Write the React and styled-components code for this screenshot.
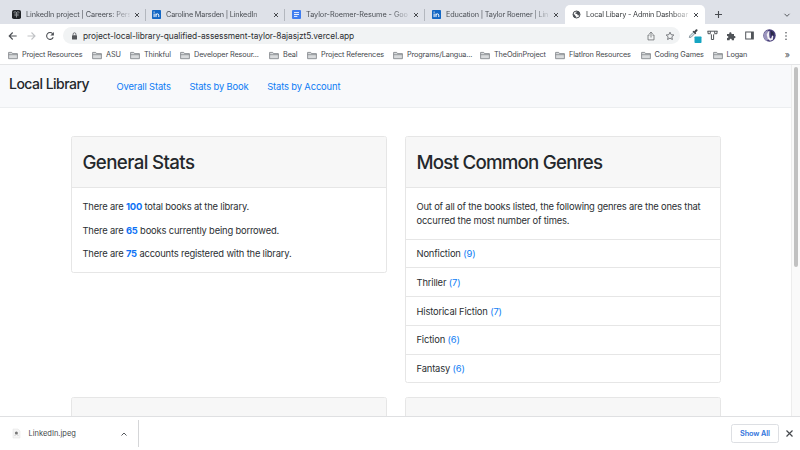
import React from "react";
import styled, { createGlobalStyle } from "styled-components";

const GlobalStyle = createGlobalStyle`
  * { box-sizing: border-box; }
  body { margin: 0; background: #fff; overflow: hidden; font-family: Inter, "Liberation Sans", sans-serif; }
  svg { display: block; flex: none; }
`;

const Browser = styled.div`
  width: 800px;
  height: 450px;
  display: flex;
  flex-direction: column;
  overflow: hidden;
  background: #fff;
`;

/* Tab strip */
const TabStrip = styled.div`
  height: 24px;
  flex: none;
  display: flex;
  align-items: flex-end;
  padding-left: 5px;
  background: #dee1e8;
`;
const Tab = styled.div`
  width: 140px;
  height: 19px;
  display: flex;
  align-items: center;
  padding: 0 6px 0 7px;
  border-radius: 5px 5px 0 0;
  background: ${(p) => (p.$active ? "#fff" : "transparent")};
  color: ${(p) => (p.$active ? "#3d4043" : "#4c5056")};
`;
const TabTitle = styled.span`
  width: 104px;
  margin: 0 4px 0 5px;
  white-space: nowrap;
  font-size: 7.3px;
  line-height: 12px;
  letter-spacing: ${(p) => p.$spacing || 0}px;
  mask-image: linear-gradient(to right, #000 86px, transparent 106px);
`;
const TabDivider = styled.i`
  width: 1px;
  height: 12px;
  margin: 0 -6px 0 5px;
  flex: none;
  align-self: center;
  background: ${(p) => (p.$hidden ? "transparent" : "#b3b7be")};
`;
const StripActions = styled.div`
  flex: 1;
  height: 19px;
  display: flex;
  align-items: center;
  justify-content: space-between;
  padding: 0 9px 0 8.5px;
`;

/* Address row */
const Toolbar = styled.div`
  height: 23px;
  flex: none;
  display: flex;
  align-items: center;
  padding: 0 8px;
`;
const NavButtons = styled.div`
  width: 55px;
  display: flex;
  gap: 9.5px;
`;
const AddressBar = styled.div`
  width: 617px;
  height: 17px;
  display: flex;
  align-items: center;
  padding: 0 5px 0 7.5px;
  border-radius: 9px;
  background: #f1f3f4;
`;
const Url = styled.span`
  flex: 1;
  margin-left: 5.5px;
  font-size: 8.4px;
  line-height: 14px;
  letter-spacing: -0.07px;
  color: #2c2e31;
`;
const AddressActions = styled.div`
  display: flex;
  gap: 9px;
`;
const Extensions = styled.div`
  display: flex;
  align-items: center;
  gap: 8.7px;
  margin-left: 8px;
`;

/* Bookmarks */
const Bookmarks = styled.div`
  height: 18px;
  flex: none;
  display: flex;
  align-items: center;
  padding: 0 10px 1px 8px;
  border-bottom: 1px solid #e4e5e7;
`;
const Bookmark = styled.div`
  width: ${(p) => p.$width}px;
  flex: none;
  display: flex;
  align-items: center;
  gap: 4px;
  white-space: nowrap;
  font-size: 7.3px;
  line-height: 12px;
  letter-spacing: -0.13px;
  color: #45484d;
`;
const Overflow = styled.span`
  margin: -2px 0 0 auto;
  font-size: 9px;
  line-height: 11px;
  color: #4b4e52;
`;

/* Page */
const Viewport = styled.div`
  height: 351px;
  flex: none;
  display: flex;
  overflow: hidden;
`;
const Page = styled.div`
  width: 791px;
  flex: none;
`;
const Scrollbar = styled.div`
  width: 9px;
  padding: 2px 0 0 2px;
  border-left: 1px solid #ededed;
  background: #fafafa;
`;
const Thumb = styled.div`
  width: 4px;
  height: 200px;
  border-radius: 2px;
  background: #c1c1c1;
`;
const SiteNav = styled.nav`
  height: 43px;
  display: flex;
  align-items: center;
  padding-left: 9px;
  border-bottom: 1px solid #eceef0;
  background: #f8f9fb;
`;
const Brand = styled.h1`
  width: 107.5px;
  margin: 0 0 5px;
  font-size: 14px;
  line-height: 17px;
  font-weight: 500;
  letter-spacing: -0.52px;
  white-space: nowrap;
  color: #24282c;
`;
const SiteLinks = styled.div`
  display: flex;
  gap: 18.7px;
  padding-top: 1px;
`;
const SiteLink = styled.a`
  font-size: 9.4px;
  line-height: 14px;
  letter-spacing: -0.14px;
  color: #0d7cf5;
`;
const CardGrid = styled.main`
  display: grid;
  grid-template-columns: 316.5px 316.5px;
  gap: 14px 17.5px;
  align-items: start;
  padding: 28px 0 0 70.5px;
`;
const Card = styled.section`
  border: 1px solid #e6e6e6;
  border-radius: 2.5px;
  overflow: hidden;
  background: #fff;
`;
const CardHeader = styled.header`
  height: 51px;
  display: flex;
  align-items: center;
  padding: 1px 11px 0;
  border-bottom: 1px solid #e6e6e6;
  background: #f7f7f7;
`;
const CardTitle = styled.h2`
  margin: 0;
  font-size: 18.7px;
  line-height: 23px;
  font-weight: 500;
  letter-spacing: ${(p) => p.$spacing}px;
  color: #24282c;
`;
const CardBody = styled.div`
  padding: 12px 11.5px ${(p) => p.$bottom}px 11px;
  font-size: 9.4px;
  line-height: 14.4px;
  letter-spacing: -0.185px;
  color: #2b2f33;
`;
const Paragraph = styled.p`
  margin: 0 0 9.1px;
  white-space: nowrap;
`;
const Figure = styled.strong`
  font-weight: 700;
  color: #0d72f5;
`;
const GenreList = styled.ul`
  margin: 0;
  padding: 0;
  list-style: none;
`;
const Genre = styled.li`
  height: 28.7px;
  padding: 7.4px 11px 0;
  border-top: 1px solid #e6e6e6;
  font-size: 9.4px;
  line-height: 14.4px;
  letter-spacing: -0.16px;
  color: #2b2f33;
`;
const Count = styled.span`
  color: #0d7cf5;
`;

/* Download shelf */
const Shelf = styled.footer`
  height: 34px;
  flex: none;
  display: flex;
  align-items: center;
  padding-right: 6px;
  border-top: 1px solid #dfe0e2;
`;
const Download = styled.div`
  width: 139px;
  height: 27px;
  display: flex;
  align-items: center;
  justify-content: space-between;
  padding: 0 10px 0 11px;
  border-right: 1px solid #d5d6d8;
`;
const FileName = styled.span`
  flex: 1;
  margin-left: 6.5px;
  font-size: 7.5px;
  letter-spacing: 0;
  color: #44474b;
`;
const ShowAll = styled.button`
  width: 48px;
  height: 19px;
  margin: 0 6px 0 auto;
  padding: 0;
  border: 1px solid #dddfe3;
  border-radius: 2.5px;
  background: #fff;
  font: 600 7.3px Inter, sans-serif;
  letter-spacing: -0.1px;
  color: #2f73dc;
`;

/* Icons */
const Close = ({ size = 6, color = "#46494e" }) => (
  <svg width={size} height={size} viewBox="0 0 6 6">
    <path d="M1 1l4 4M5 1L1 5" stroke={color} strokeWidth={size > 6 ? 0.8 : 1} />
  </svg>
);
const Chevron = ({ up }) => (
  <svg width="8" height="8" viewBox="0 0 8 8" fill="none">
    <path d={up ? "M1.5 5.5L4 3l2.5 2.5" : "M1.5 2.8L4 5.3l2.5-2.5"} stroke="#55585d" strokeWidth="1" />
  </svg>
);
const ThinkfulMark = () => (
  <svg width="9" height="9" viewBox="0 0 9 9">
    <rect width="9" height="9" rx="1.8" fill="#202327" />
    <path d="M1.6 2.5l1.5-.8 1.4.8 1.4-.8 1.5.8M4.5 2.5v5M3.1 3.3v2.8M5.9 3.3v2.8" stroke="#b9bdc1" strokeWidth=".7" fill="none" />
  </svg>
);
const LinkedInMark = () => (
  <svg width="9" height="9" viewBox="0 0 9 9">
    <rect width="9" height="9" rx=".8" fill="#1266c4" />
    <path d="M2.1 3.6v3.5M4 7.1V3.6M4 5.2c0-1.8 2.8-1.8 2.8 0v1.9" fill="none" stroke="#fff" strokeWidth="1" />
    <circle cx="2.1" cy="2.1" r=".65" fill="#fff" />
  </svg>
);
const DocsMark = () => (
  <svg width="9" height="9" viewBox="0 0 9 9">
    <rect width="9" height="9" rx="1" fill="#3f7df0" />
    <path d="M2 2.6h5M2 4.5h5M2 6.4h3.4" stroke="#fff" strokeWidth=".9" />
  </svg>
);
const GlobeMark = () => (
  <svg width="9" height="9" viewBox="0 0 9 9">
    <circle cx="4.5" cy="4.5" r="3.5" fill="#fff" stroke="#4b4f54" strokeWidth="1" />
    <path d="M1 3.8L3.2 5v1l1 .5v1.4C2.3 8 .9 6.5 1 3.8zM4.2 1h2L8 3.6 7.5 5.5 5.500 5.200 5.300 4 3.300 3.700 3.600 2.500 4.800 2.200z" fill="#4b4f54" />
  </svg>
);
const Folder = () => (
  <svg width="10" height="9" viewBox="0 0 10 9">
    <path d="M.6 7.7V1.4h3.1l.9 1.2h4.8v5.1z" fill="#d8dadc" stroke="#7b7f84" strokeWidth=".8" />
    <path d="M.6 3.7h8.8" stroke="#7b7f84" strokeWidth=".7" />
  </svg>
);
const Back = ({ forward }) => (
  <svg width="9" height="10" viewBox="0 0 9 10" fill="none" stroke={forward ? "#c1c3c6" : "#4b4e53"} strokeWidth="1.1">
    <path d={forward ? "M.5 5h7.5M4.5 1.5L8 5 4.5 8.5" : "M8.7 5H1.2M4.7 1.5L1.2 5l3.5 3.5"} />
  </svg>
);
const Reload = () => (
  <svg width="10" height="10" viewBox="0 0 10 10" fill="none" stroke="#4b4e53" strokeWidth="1.1">
    <path d="M8.2 6.2A3.4 3.4 0 1 1 7.6 2.7" />
    <path d="M8.9 .9v3.5H5.4z" fill="#4b4e53" stroke="none" />
  </svg>
);
const Lock = () => (
  <svg width="7" height="8" viewBox="0 0 7 8">
    <rect x="1" y="3.2" width="5" height="4.3" rx=".5" fill="#53565a" />
    <path d="M2.1 3.4V2.2a1.4 1.4 0 0 1 2.8 0v1.2" fill="none" stroke="#53565a" strokeWidth=".8" />
  </svg>
);
const Share = () => (
  <svg width="10" height="10" viewBox="0 0 10 10" fill="none" stroke="#696c70" strokeWidth=".8">
    <path d="M3.7 4H2v4.9h6V4H6.3M5 6.5V1.2M3.3 2.8L5 1.1l1.7 1.7" />
  </svg>
);
const Star = () => (
  <svg width="10" height="10" viewBox="0 0 10 10" fill="none" stroke="#5d6064" strokeWidth=".8" strokeLinejoin="round">
    <path d="M5 1.2l1.15 2.5 2.7.3-2 1.8.55 2.7L5 7.15 2.6 8.5l.55-2.7-2-1.8 2.7-.3z" />
  </svg>
);
const Dropper = () => (
  <svg width="10" height="15" viewBox="0 0 10 15" overflow="visible">
    <path d="M1.3 9.5l.5-1.7 3.5-3.5 1.4 1.4-3.5 3.5z" fill="#d6e5ea" stroke="#72828b" strokeWidth=".8" />
    <path d="M4.5 3.6l1-.8.8.5 1.5-1.7c1-1 2.4.3 1.5 1.4L7.7 4.6l.5.8-.9.9z" fill="#41474c" />
    <rect x="6.500" y="8.500" width="7" height="6.500" rx=".7" fill="#16a5c2" />
  </svg>
);
const PipeMark = () => (
  <svg width="11" height="11" viewBox="0 0 11 11" fill="none" stroke="#505459" strokeWidth="1">
    <path d="M1 1v2.700h2.400l1 .9V9.500h2.200V4.600l1-.9H10V1M.5 1.200h10M3.300 1.200v1.800M7.700 1.200v1.800" />
  </svg>
);
const Puzzle = () => (
  <svg width="10" height="10" viewBox="0 0 10 10">
    <path d="M1 3h2.300c-.7-2.500 2.800-2.500 2.200 0H8v2c2-.4 2 2.500 0 2.200V9.300H5.800c.3-2-2.400-2-2.200 0H1V7.100c1.900.1 1.900-2.300 0-2.200z" fill="#505459" />
  </svg>
);
const SidePanel = () => (
  <svg width="9" height="9" viewBox="0 0 9 9">
    <rect x=".7" y="1" width="7.6" height="7" fill="#fff" stroke="#505459" strokeWidth="1" />
    <path d="M6 1h2.300v7H6z" fill="#505459" />
  </svg>
);
const Avatar = () => (
  <svg width="13" height="13" viewBox="0 0 13 13">
    <circle cx="6.5" cy="6.5" r="6.2" fill="#463d78" />
    <path d="M1 4.500Q2 1.500 5 .9L4 5l1.400 5.500L3.500 12C.8 10.200 0 7.200 1 4.500z" fill="#9a94bd" />
    <path d="M4.800 2.500L6.500 2l-.3 3 .3 3.500 1.500 1.300 1.300-3.300 1 .7-.5 3.500-2.800 1.100-2.300-2L3.700 5.700z" fill="#f1eff4" />
    <path d="M7.500 1.500l3 2 .6 4-1.500-2-1.300 1.600z" fill="#282846" />
  </svg>
);
const Menu = () => (
  <svg width="4" height="10" viewBox="0 0 4 10" fill="#505459">
    <circle cx="2" cy="1.8" r=".8" /><circle cx="2" cy="5" r=".8" /><circle cx="2" cy="8.2" r=".8" />
  </svg>
);
const Plus = () => (
  <svg width="9" height="9" viewBox="0 0 9 9"><path d="M4.500 1v7M1 4.500h7" stroke="#484b50" strokeWidth="1.1" /></svg>
);
const FileIcon = () => (
  <svg width="11" height="11" viewBox="0 0 11 11">
    <path d="M2 1h5l2 2v7H2z" fill="#f5f5f5" stroke="#e3e3e3" strokeWidth=".5" />
    <circle cx="5.4" cy="5" r="1.5" fill="#777" />
    <path d="M3.500 7.500q2-2 4 0" fill="none" stroke="#bbb" strokeWidth=".7" />
  </svg>
);

const tabs = [
  { title: "LinkedIn project | Careers: Pers", icon: <ThinkfulMark />, spacing: -0.1 },
  { title: "Caroline Marsden | LinkedIn", icon: <LinkedInMark />, spacing: -0.19 },
  { title: "Taylor-Roemer-Resume - Goo", icon: <DocsMark />, spacing: -0.05 },
  { title: "Education | Taylor Roemer | Lin", icon: <LinkedInMark />, spacing: -0.17 },
  { title: "Local Libary - Admin Dashboar", icon: <GlobeMark />, spacing: -0.17, active: true },
];
const bookmarks = [
  ["Project Resources", 84], ["ASU", 38], ["Thinkful", 50], ["Developer Resour...", 89],
  ["Beal", 38], ["Project References", 86], ["Programs/Langua...", 87], ["TheOdinProject", 75],
  ["FlatIron Resources", 85.5], ["Coding Games", 72], ["Logan", 50],
];
const stats = [
  ["100", "total books at the library."],
  ["65", "books currently being borrowed."],
  ["75", "accounts registered with the library."],
];
const genres = [["Nonfiction", 9], ["Thriller", 7], ["Historical Fiction", 7], ["Fiction", 6], ["Fantasy", 6]];

export default function App() {
  return (
    <Browser>
      <GlobalStyle />
      <TabStrip>
        {tabs.map((t, i) => (
          <Tab key={t.title} $active={t.active}>
            {t.icon}
            <TabTitle $spacing={t.spacing}>{t.title}</TabTitle>
            <Close />
            <TabDivider $hidden={i > 2} />
          </Tab>
        ))}
        <StripActions><Plus /><Chevron /></StripActions>
      </TabStrip>
      <Toolbar>
        <NavButtons><Back /><Back forward /><Reload /></NavButtons>
        <AddressBar>
          <Lock />
          <Url>project-local-library-qualified-assessment-taylor-8ajasjzt5.vercel.app</Url>
          <AddressActions><Share /><Star /></AddressActions>
        </AddressBar>
        <Extensions><Dropper /><PipeMark /><Puzzle /><SidePanel /><Avatar /><Menu /></Extensions>
      </Toolbar>
      <Bookmarks>
        {bookmarks.map(([name, width]) => <Bookmark key={name} $width={width}><Folder />{name}</Bookmark>)}
        <Overflow>»</Overflow>
      </Bookmarks>
      <Viewport>
        <Page>
          <SiteNav>
            <Brand>Local Library</Brand>
            <SiteLinks>
              <SiteLink>Overall Stats</SiteLink>
              <SiteLink>Stats by Book</SiteLink>
              <SiteLink>Stats by Account</SiteLink>
            </SiteLinks>
          </SiteNav>
          <CardGrid>
            <Card>
              <CardHeader><CardTitle $spacing={-0.63}>General Stats</CardTitle></CardHeader>
              <CardBody $bottom={1.5}>
                {stats.map(([n, text]) => <Paragraph key={n}>There are <Figure>{n}</Figure> {text}</Paragraph>)}
              </CardBody>
            </Card>
            <Card>
              <CardHeader><CardTitle $spacing={-0.76}>Most Common Genres</CardTitle></CardHeader>
              <CardBody $bottom={0.9}>
                <Paragraph>
                  Out of all of the books listed, the following genres are the ones that<br />
                  occurred the most number of times.
                </Paragraph>
              </CardBody>
              <GenreList>
                {genres.map(([name, count]) => <Genre key={name}>{name} <Count>({count})</Count></Genre>)}
              </GenreList>
            </Card>
            <Card><CardHeader /></Card>
            <Card><CardHeader /></Card>
          </CardGrid>
        </Page>
        <Scrollbar><Thumb /></Scrollbar>
      </Viewport>
      <Shelf>
        <Download><FileIcon /><FileName>LinkedIn.jpeg</FileName><Chevron up /></Download>
        <ShowAll>Show All</ShowAll>
        <Close size={9} />
      </Shelf>
    </Browser>
  );
}
